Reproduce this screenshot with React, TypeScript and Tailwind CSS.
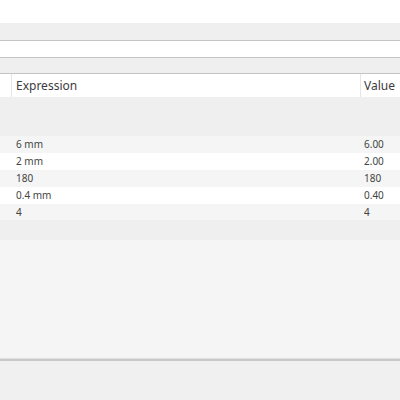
import React from 'react';

const rows = [
  { expr: '6 mm', value: '6.00' },
  { expr: '2 mm', value: '2.00' },
  { expr: '180', value: '180' },
  { expr: '0.4 mm', value: '0.40' },
  { expr: '4', value: '4' },
];

export default function App() {
  return (
    <div className="w-[400px] h-[400px] flex flex-col overflow-hidden bg-white text-[#3c3c3c]" style={{ fontFamily: '"Noto Sans", "Open Sans", sans-serif' }}>
      {/* top blank */}
      <div className="h-[23px] bg-white" />
      {/* toolbar strips */}
      <div className="h-[18px] bg-[#efefef] border-b border-[#c4c4c4]" />
      <div className="h-[17px] bg-white border-b border-[#c4c4c4]" />
      <div className="h-[16px] bg-[#efefef] border-b border-[#c4c4c4]" />

      {/* header */}
      <div className="h-[23px] bg-white flex items-center text-[12px]">
        <div className="w-[12px] h-full border-r border-[#e6e6e6]" />
        <div className="flex-1 pl-[4px]">Expression</div>
        <div className="w-[40px] h-full border-l border-[#e6e6e6] pl-[3px] flex items-center">Value</div>
      </div>

      <div className="h-[39px] bg-[#efefef]" />

      {/* parameter rows */}
      <div className="flex flex-col text-[10px] text-[#444]">
        {rows.map((r, i) => (
          <div
            key={i}
            className={`flex items-center ${i === 4 ? 'h-[16px]' : 'h-[17px]'} ${i % 2 === 0 ? 'bg-[#f5f5f5]' : 'bg-white'}`}
          >
            <div className="w-[16px]" />
            <div className="flex-1">{r.expr}</div>
            <div className="w-[36px]">{r.value}</div>
          </div>
        ))}
      </div>

      <div className="h-[20px] bg-[#efefef]" />
      <div className="h-[118px] bg-[#f5f5f5]" />
      <div className="h-[3px] bg-[#c8c8c8] border-t border-[#e0e0e0]" />
      <div className="flex-1 bg-[#f0f0f0]" />
    </div>
  );
}
